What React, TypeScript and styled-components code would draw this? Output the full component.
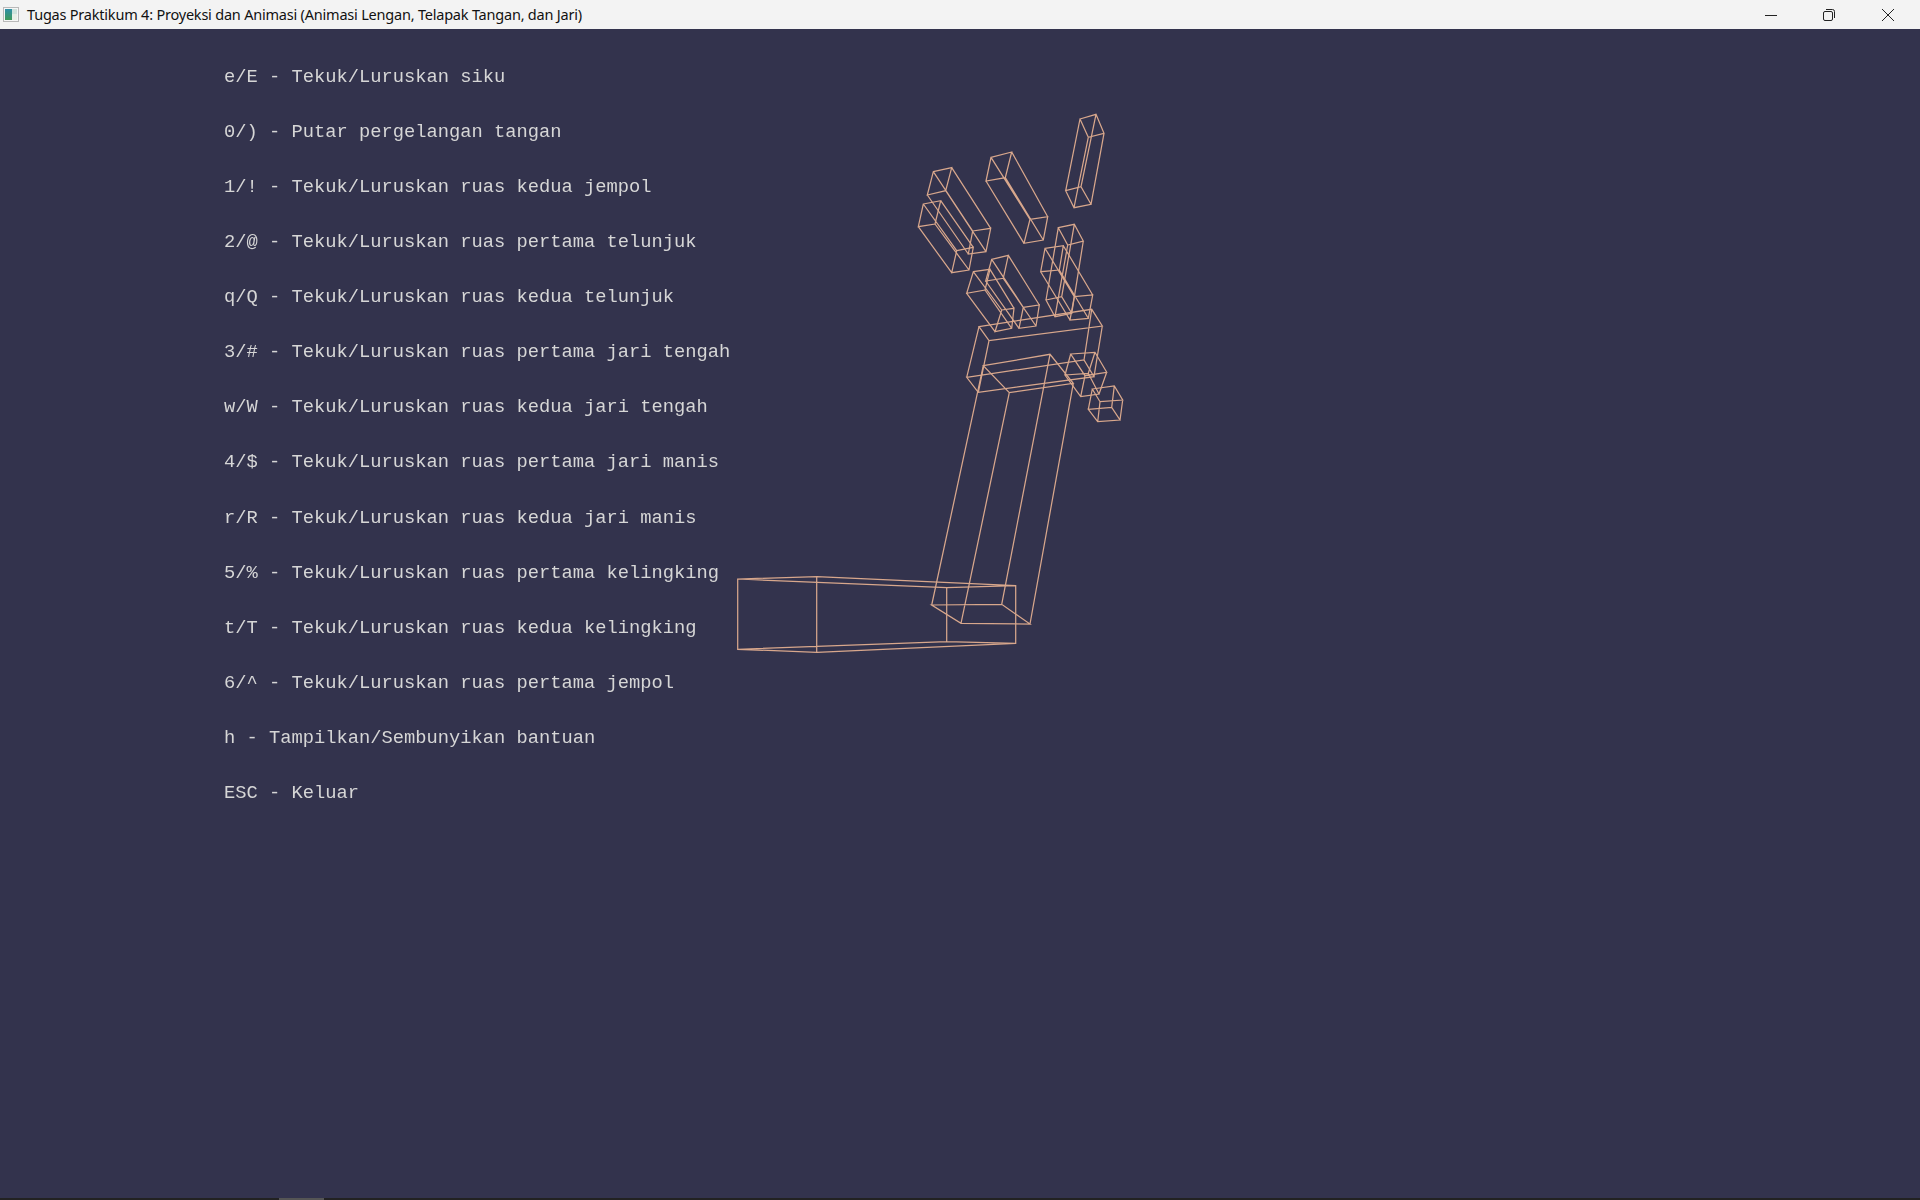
import React from "react";
import styled, { createGlobalStyle } from "styled-components";

const Global = createGlobalStyle`
  html, body { margin: 0; padding: 0; background: #33334d; }
  #root { width: 1920px; height: 1200px; }
`;

const Window = styled.div`
  width: 1920px;
  height: 1200px;
  display: flex;
  flex-direction: column;
  overflow: hidden;
`;

const TitleBar = styled.header`
  height: 29px;
  flex: none;
  display: flex;
  align-items: center;
  background: #f3f3f3;
  padding: 0 3px;
`;

const AppIcon = styled.svg`
  width: 18px;
  height: 16px;
  flex: none;
  margin-right: 6px;
`;

const Title = styled.h1`
  margin: 0 0 2px;
  flex: 1;
  font: 400 14.5px "Noto Sans", "Liberation Sans", sans-serif;
  color: #111;
  letter-spacing: -0.21px;
  white-space: nowrap;
`;

const Controls = styled.div`
  display: flex;
  height: 29px;
`;

const ControlButton = styled.div`
  width: 58.5px;
  height: 29px;
  display: flex;
  align-items: center;
  justify-content: center;
  svg { display: block; }
`;

const Viewport = styled.main`
  flex: 1;
  display: flex;
  align-items: flex-start;
  background: #33334d;
`;

const HelpList = styled.ul`
  margin: 0;
  padding: 20.5px 0 0 224px;
  list-style: none;
  width: 736px;
  box-sizing: border-box;
  flex: none;
`;

const HelpRow = styled.li`
  height: 55.15px;
  line-height: 55.15px;
  font-family: "Liberation Mono", "DejaVu Sans Mono", monospace;
  font-size: 18.75px;
  color: #d6d6d6;
  white-space: pre;
  filter: blur(0.3px);
`;

const Wireframe = styled.svg`
  flex: none;
  width: 400px;
  height: 570px;
  margin-top: 81px;
`;

const BottomEdge = styled.footer`
  height: 2px;
  flex: none;
  background: #222222;
  display: flex;
`;

const EdgeThumb = styled.div`
  width: 45px;
  margin-left: 279px;
  background: #555555;
`;

type P = [number, number];
type Box = { o: P; s: number; a: P[]; b: P[] };

const boxes: Box[] = [
  // outer finger segments
  { o: [900, 100], s: 3, a: [[540, 57], [588, 43], [612, 100], [565, 112]], b: [[497, 272], [543, 260], [573, 313], [522, 323]] },
  { o: [900, 100], s: 3, a: [[273, 172], [335, 156], [316, 233], [258, 243]], b: [[390, 358], [443, 350], [430, 420], [372, 430]] },
  { o: [900, 100], s: 3, a: [[100, 215], [155, 203], [137, 272], [82, 285]], b: [[218, 393], [272, 385], [258, 455], [205, 462]] },
  { o: [900, 100], s: 3, a: [[70, 312], [122, 302], [105, 372], [55, 380]], b: [[170, 452], [220, 442], [207, 510], [155, 518]] },
  // inner finger segments
  { o: [940, 220], s: 3, a: [[155, 118], [205, 106], [190, 175], [137, 183]], b: [[250, 262], [298, 255], [288, 318], [237, 325]] },
  { o: [940, 220], s: 3, a: [[100, 155], [150, 148], [135, 210], [80, 220]], b: [[185, 270], [222, 265], [215, 325], [165, 335]] },
  { o: [1020, 215], s: 3, a: [[115, 38], [163, 28], [190, 78], [143, 90]], b: [[78, 255], [125, 245], [155, 295], [105, 305]] },
  { o: [1020, 215], s: 3, a: [[75, 100], [130, 92], [118, 165], [62, 170]], b: [[163, 245], [218, 240], [205, 310], [150, 315]] },
  // palm
  { o: [940, 220], s: 3, a: [[117, 320], [455, 268], [487, 318], [147, 362]], b: [[80, 472], [432, 420], [462, 470], [115, 517]] },
  // thumb
  { o: [1050, 340], s: 3, a: [[62, 42], [135, 37], [170, 97], [105, 107]], b: [[45, 105], [115, 100], [147, 162], [92, 170]] },
  { o: [1050, 340], s: 3, a: [[127, 147], [193, 138], [218, 180], [150, 185]], b: [[115, 208], [185, 202], [210, 240], [143, 245]] },
  // upper arm
  { o: [0, 0], s: 1, a: [[983.3, 365.7], [1050, 354.3], [1073.3, 383.3], [1009.3, 392.7]], b: [[931.7, 605], [1001.7, 604.3], [1030, 624], [961, 623.3]] },
  // forearm
  { o: [0, 0], s: 1, a: [[737.7, 579], [816.7, 576.7], [816.7, 652.3], [737.7, 649.3]], b: [[946.7, 587.7], [1015.7, 585.7], [1015.7, 643.3], [946.7, 641.7]] },
];

const toAbs = (box: Box, p: P): string =>
  `${(box.o[0] + p[0] / box.s).toFixed(1)} ${(box.o[1] + p[1] / box.s).toFixed(1)}`;

const boxPath = (box: Box): string => {
  const quad = (q: P[]) => `M${q.map((p) => toAbs(box, p)).join("L")}Z`;
  const links = box.a.map((p, i) => `M${toAbs(box, p)}L${toAbs(box, box.b[i])}`).join("");
  return quad(box.a) + quad(box.b) + links;
};

const helpLines = [
  "e/E - Tekuk/Luruskan siku",
  "0/) - Putar pergelangan tangan",
  "1/! - Tekuk/Luruskan ruas kedua jempol",
  "2/@ - Tekuk/Luruskan ruas pertama telunjuk",
  "q/Q - Tekuk/Luruskan ruas kedua telunjuk",
  "3/# - Tekuk/Luruskan ruas pertama jari tengah",
  "w/W - Tekuk/Luruskan ruas kedua jari tengah",
  "4/$ - Tekuk/Luruskan ruas pertama jari manis",
  "r/R - Tekuk/Luruskan ruas kedua jari manis",
  "5/% - Tekuk/Luruskan ruas pertama kelingking",
  "t/T - Tekuk/Luruskan ruas kedua kelingking",
  "6/^ - Tekuk/Luruskan ruas pertama jempol",
  "h - Tampilkan/Sembunyikan bantuan",
  "ESC - Keluar",
];

export default function App() {
  return (
    <Window>
      <Global />
      <TitleBar>
        <AppIcon viewBox="0 0 18 16">
          <defs>
            <linearGradient id="appIconFill" x1="0" y1="0" x2="0" y2="1">
              <stop offset="0" stopColor="#2f8fa8" />
              <stop offset="1" stopColor="#3f9a5a" />
            </linearGradient>
          </defs>
          <rect x="0.5" y="0.5" width="15" height="14" fill="#f6f6f6" stroke="#b9b9b9" />
          <rect x="2" y="2" width="7" height="11" fill="url(#appIconFill)" />
          <rect x="9" y="2" width="5" height="5" fill="#cfe3dc" />
          <rect x="9" y="7" width="5" height="6" fill="#e9efe6" />
        </AppIcon>
        <Title>Tugas Praktikum 4: Proyeksi dan Animasi (Animasi Lengan, Telapak Tangan, dan Jari)</Title>
        <Controls>
          <ControlButton>
            <svg width="12" height="12" viewBox="0 0 12 12">
              <path d="M0 6.5H12" stroke="#222" strokeWidth="1" fill="none" />
            </svg>
          </ControlButton>
          <ControlButton>
            <svg width="12" height="12" viewBox="0 0 12 12" fill="none" stroke="#222" strokeWidth="1">
              <rect x="0.5" y="2.5" width="9" height="9" rx="1.5" />
              <path d="M3 0.5H9.5A2 2 0 0 1 11.5 2.5V9" />
            </svg>
          </ControlButton>
          <ControlButton>
            <svg width="12" height="12" viewBox="0 0 12 12">
              <path d="M0 0L12 12M12 0L0 12" stroke="#222" strokeWidth="1" fill="none" />
            </svg>
          </ControlButton>
        </Controls>
      </TitleBar>
      <Viewport>
        <HelpList>
          {helpLines.map((line) => (
            <HelpRow key={line}>{line}</HelpRow>
          ))}
        </HelpList>
        <Wireframe viewBox="736 110 400 570">
          {boxes.map((box, i) => (
            <path key={i} d={boxPath(box)} fill="none" stroke="#d8a78c" strokeWidth="1.25" />
          ))}
        </Wireframe>
      </Viewport>
      <BottomEdge>
        <EdgeThumb />
      </BottomEdge>
    </Window>
  );
}
